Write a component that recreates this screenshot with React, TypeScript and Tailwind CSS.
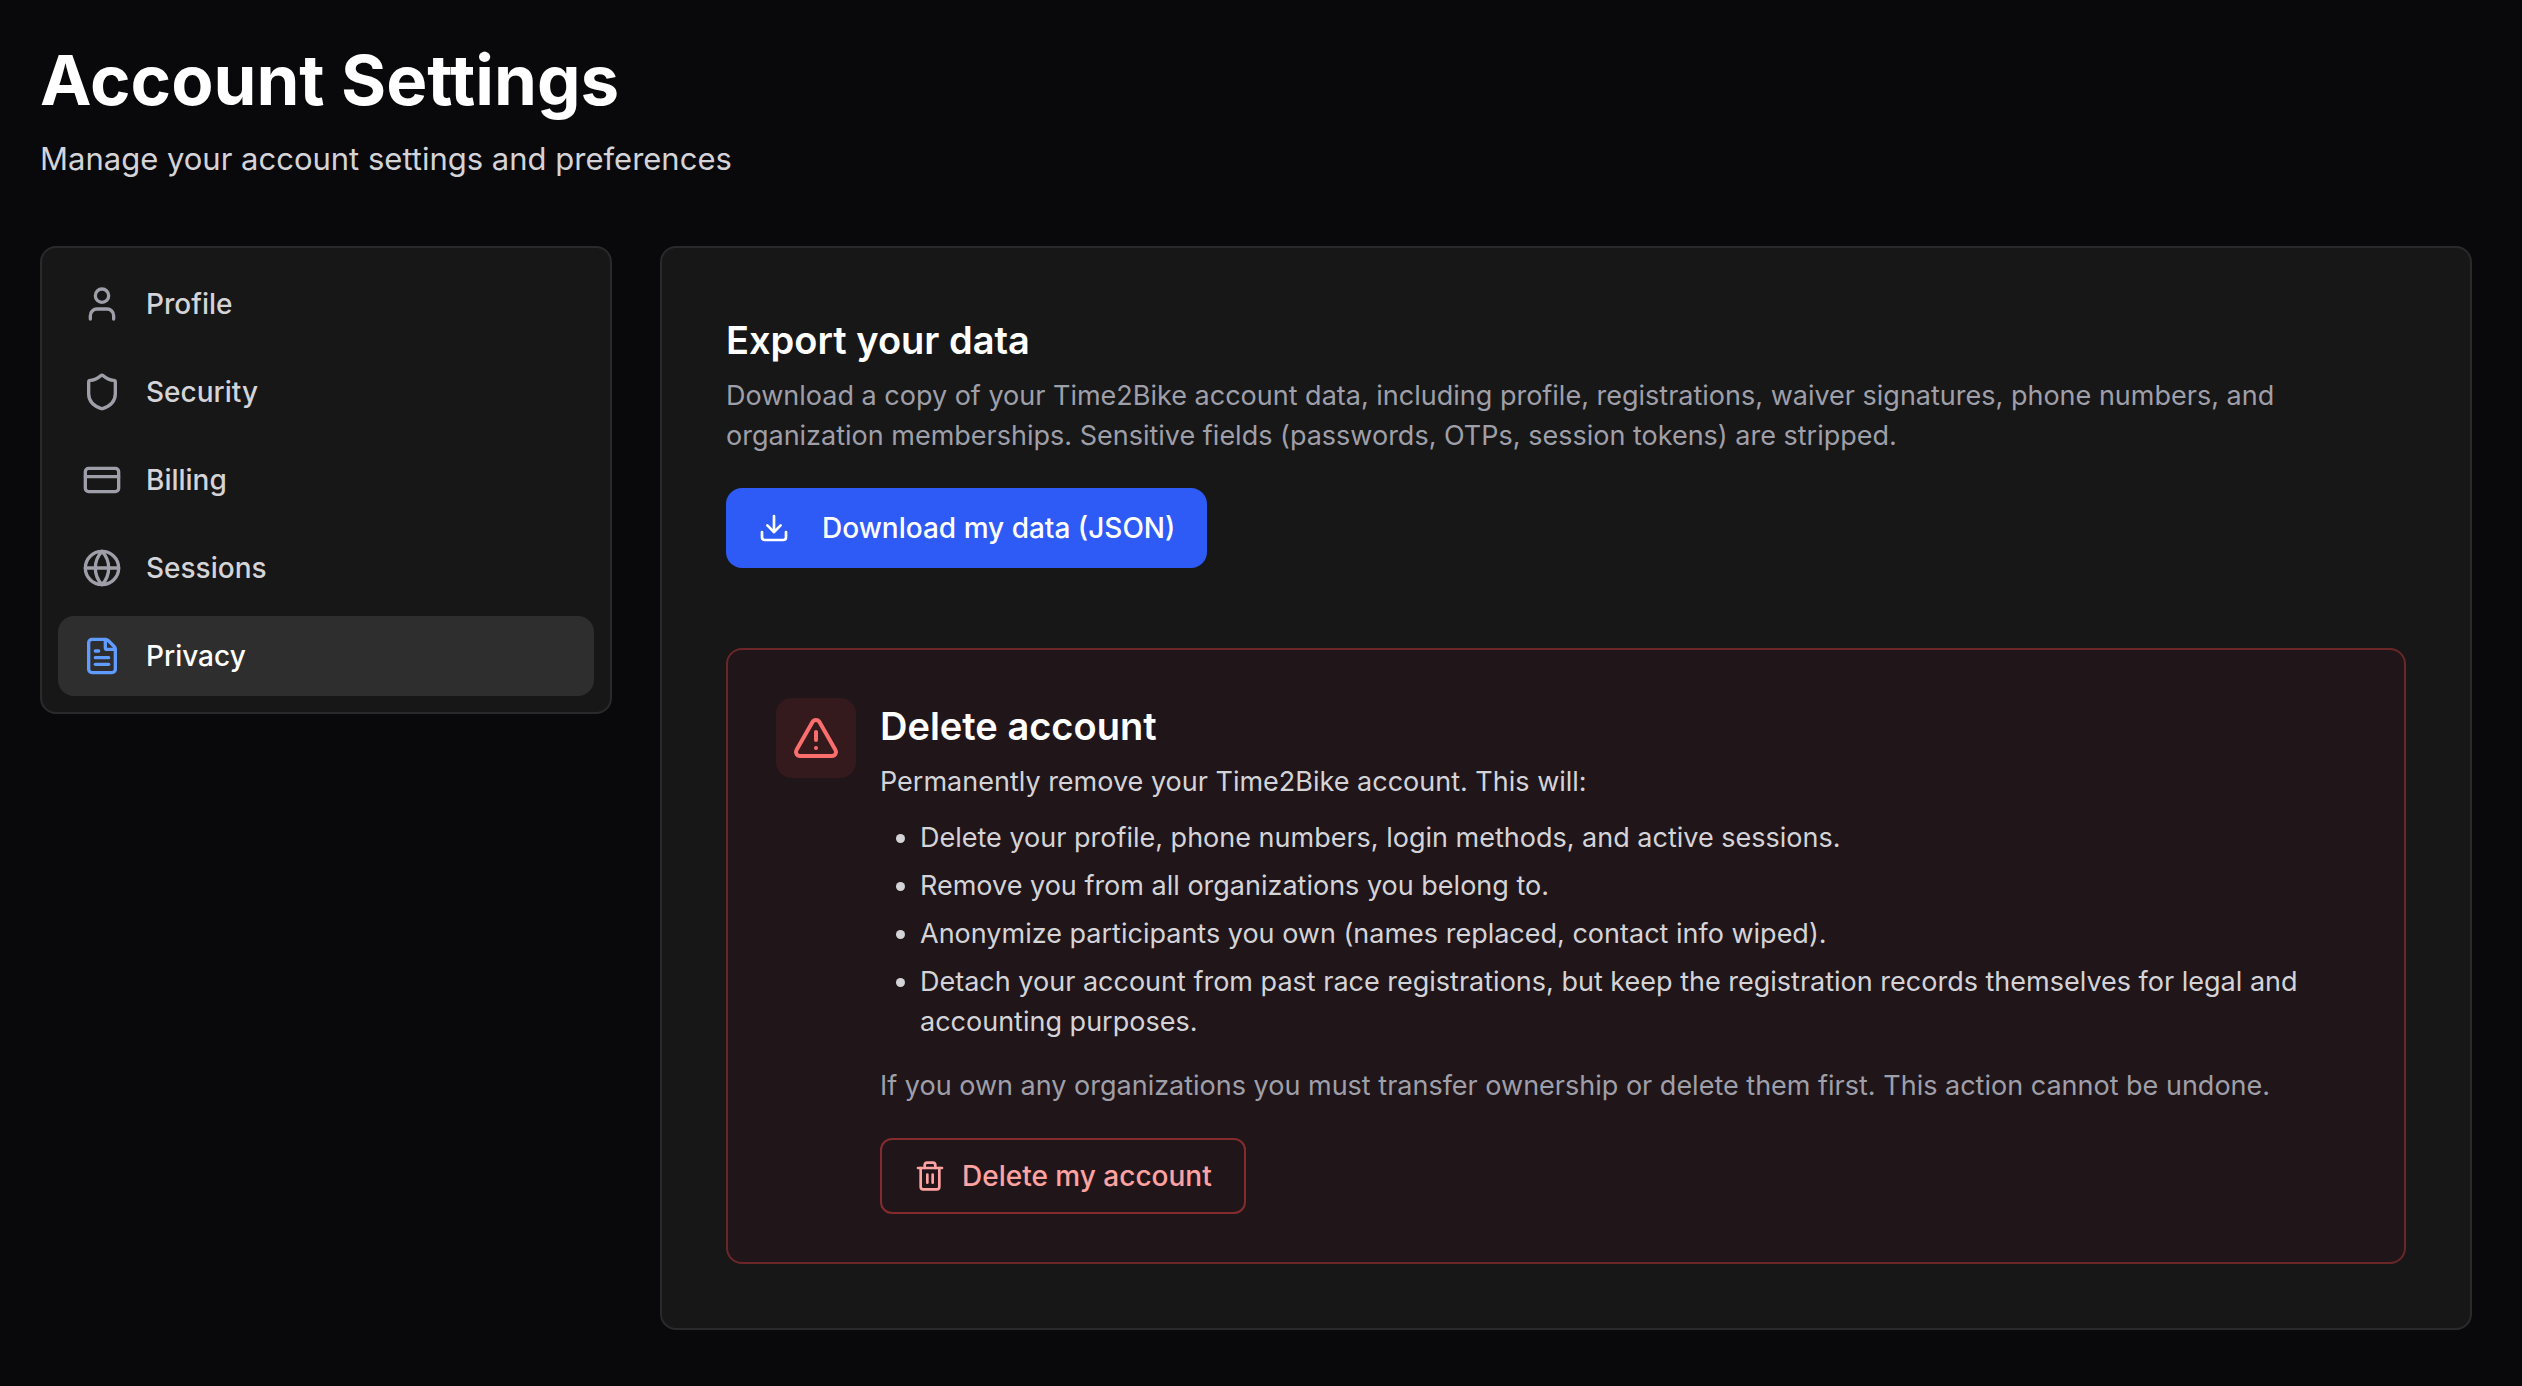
import React, { useState } from "react";
import { CreditCard, Download, FileText, Globe, Shield, Trash2, TriangleAlert, User } from "lucide-react";

const tabs = [
  { id: "profile", label: "Profile", icon: User },
  { id: "security", label: "Security", icon: Shield },
  { id: "billing", label: "Billing", icon: CreditCard },
  { id: "sessions", label: "Sessions", icon: Globe },
  { id: "privacy", label: "Privacy", icon: FileText },
];

const deletionEffects = [
  "Delete your profile, phone numbers, login methods, and active sessions.",
  "Remove you from all organizations you belong to.",
  "Anonymize participants you own (names replaced, contact info wiped).",
  "Detach your account from past race registrations, but keep the registration records themselves for legal and accounting purposes.",
];

const SettingsNav = ({ active, onSelect }: { active: string; onSelect: (id: string) => void }) => (
  <nav className="flex flex-col gap-2 p-4 rounded-2xl border-2 border-[#2a2a2e] bg-neutral-900">
    {tabs.map(({ id, label, icon: Icon }) => {
      const isActive = active === id;
      return (
        <button
          key={id}
          type="button"
          onClick={() => onSelect(id)}
          aria-current={isActive ? "page" : undefined}
          className={`flex items-center gap-6 w-full px-6 py-5 rounded-2xl text-[28px] leading-10 font-medium text-left ${
            isActive ? "bg-[#2e2e2e] text-white" : "text-zinc-300 hover:bg-zinc-800"
          }`}
        >
          <Icon className={`size-10 shrink-0 ${isActive ? "text-[#609bff]" : "text-zinc-400"}`} />
          {label}
        </button>
      );
    })}
  </nav>
);

const ExportSection = () => (
  <section>
    <h2 className="text-[38px] leading-14 font-semibold text-white">Export your data</h2>
    <p className="mt-2 text-[27px] leading-10 text-zinc-400">
      Download a copy of your Time2Bike account data, including profile, registrations, waiver signatures, phone
      numbers, and organization memberships. Sensitive fields (passwords, OTPs, session tokens) are stripped.
    </p>
    <button
      type="button"
      className="mt-8 flex items-center gap-8 h-20 px-8 rounded-2xl bg-[#2e5bf5] hover:bg-blue-700 text-[28px] leading-10 font-medium text-white"
    >
      <Download className="size-8 shrink-0" />
      Download my data (JSON)
    </button>
  </section>
);

const DeleteSection = () => (
  <section className="flex items-start gap-6 p-12 rounded-2xl border-2 border-[#6b2628] bg-[#201619]">
    <div className="p-4 rounded-2xl bg-[#341a1c]">
      <TriangleAlert className="size-12 text-[#fa6f6d]" />
    </div>
    <div className="flex-1 text-[27px] leading-10">
      <h2 className="text-[38px] leading-14 font-semibold text-white">Delete account</h2>
      <p className="mt-2 text-zinc-300">Permanently remove your Time2Bike account. This will:</p>
      <ul className="mt-4 pl-10 flex flex-col gap-2 list-disc text-zinc-300">
        {deletionEffects.map((effect) => (
          <li key={effect}>{effect}</li>
        ))}
      </ul>
      <p className="mt-6 text-zinc-400">
        If you own any organizations you must transfer ownership or delete them first. This action cannot be undone.
      </p>
      <button
        type="button"
        className="mt-8 flex items-center gap-4 px-8 py-4 rounded-xl border-2 border-[#842c2d] hover:bg-red-950 text-[28px] leading-10 font-medium text-red-300"
      >
        <Trash2 className="size-8 shrink-0" />
        Delete my account
      </button>
    </div>
  </section>
);

const App = () => {
  const [activeTab, setActiveTab] = useState("privacy");

  return (
    <main className="min-h-screen bg-zinc-950 pl-10 pr-[50px] pt-10 pb-14 font-['Inter',sans-serif]">
      <header>
        <h1 className="text-[69px] leading-20 font-bold text-white">Account Settings</h1>
        <p className="mt-4 text-[31px] leading-[46px] text-zinc-300">Manage your account settings and preferences</p>
      </header>

      <div className="mt-16 grid grid-cols-4 items-start gap-12">
        <SettingsNav active={activeTab} onSelect={setActiveTab} />
        <div className="col-span-3 flex flex-col gap-20 p-16 rounded-2xl border-2 border-[#2a2a2e] bg-neutral-900">
          <ExportSection />
          <DeleteSection />
        </div>
      </div>
    </main>
  );
};

export default App;
